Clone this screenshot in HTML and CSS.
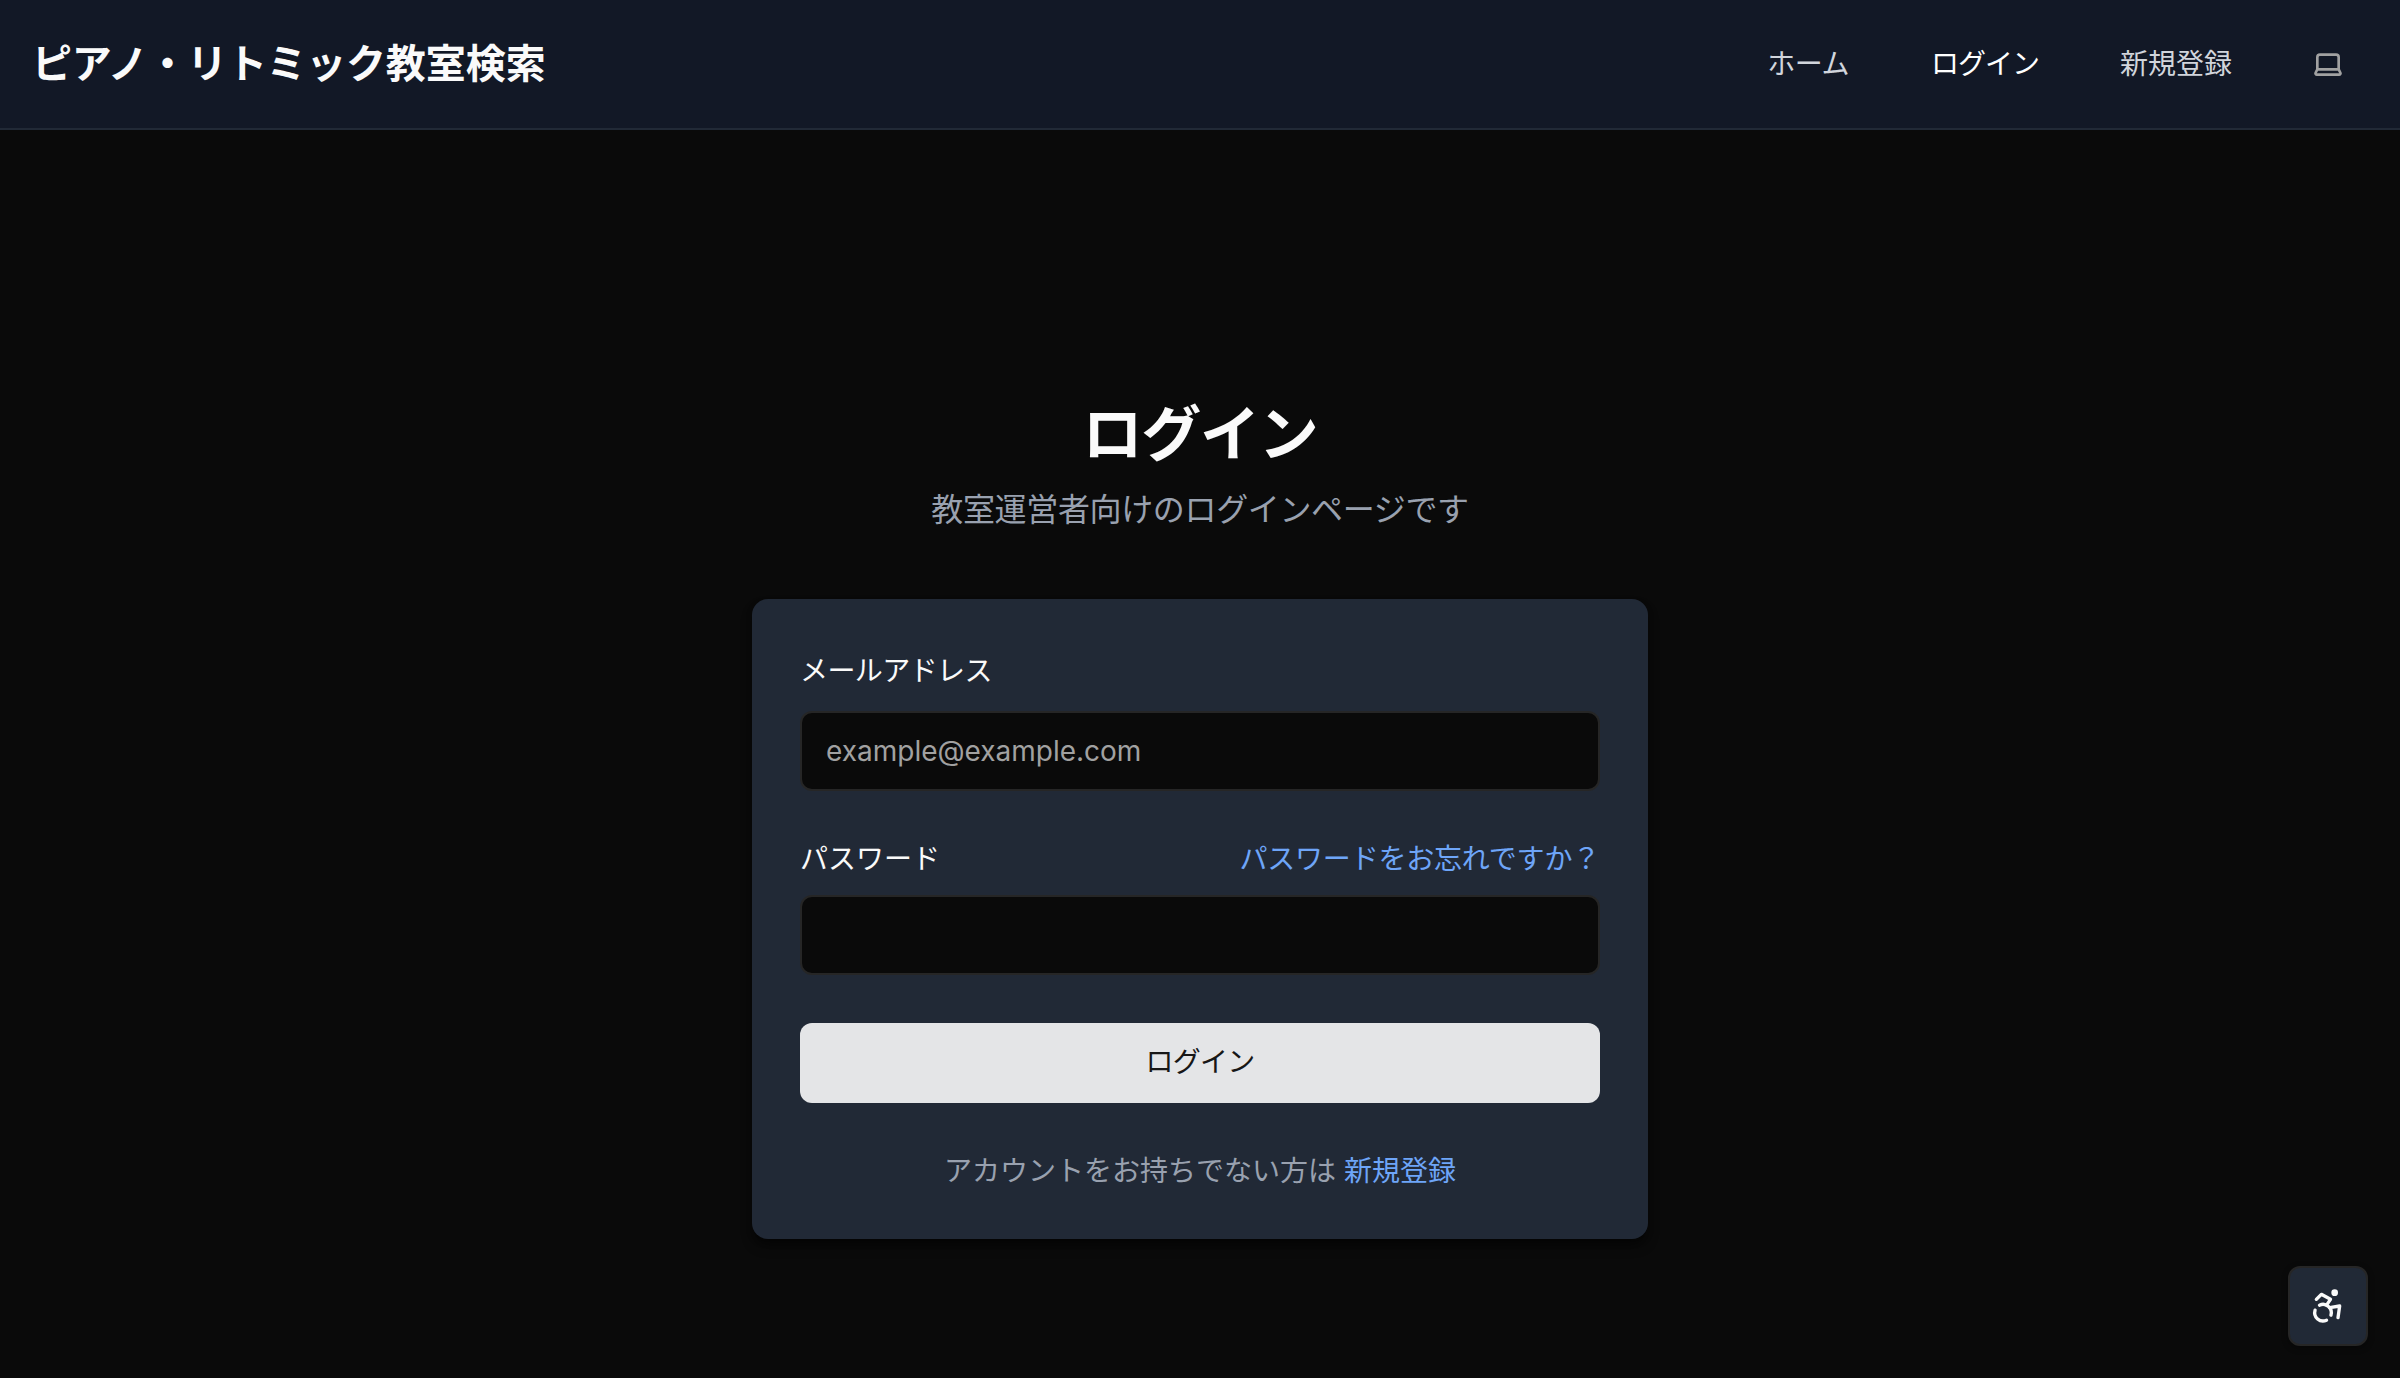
FILE: index.html
```html
<!DOCTYPE html>
<html lang="ja">
<head>
<meta charset="utf-8">
<title>ログイン</title>
<link rel="stylesheet" href="styles.css">
</head>
<body>
<header class="header">
  <a class="brand"><span class="brand-kana">ピアノ・リトミック</span>教室検索</a>
  <nav class="nav">
    <a class="nav-link nav-home">ホーム</a>
    <a class="nav-link nav-login active">ログイン</a>
    <a class="nav-link nav-signup">新規登録</a>
    <button class="theme" aria-label="テーマ">
      <svg width="32" height="32" viewBox="0 0 24 24" fill="none" stroke="currentColor" stroke-width="2" stroke-linecap="round" stroke-linejoin="round"><path d="M20 16V7a2 2 0 0 0-2-2H6a2 2 0 0 0-2 2v9m16 0H4m16 0 1.28 2.55a1 1 0 0 1-.9 1.45H3.62a1 1 0 0 1-.9-1.45L4 16"/></svg>
    </button>
  </nav>
</header>
<main class="main">
  <h1 class="title">ログイン</h1>
  <p class="subtitle">教室運営者向けのログインページです</p>
  <form class="card">
    <label class="label label-email" for="email">メールアドレス</label>
    <input class="input" id="email" type="email" placeholder="example@example.com">
    <div class="row">
      <label class="label" for="password">パスワード</label>
      <a class="link forgot">パスワードをお忘れですか？</a>
    </div>
    <input class="input" id="password" type="password">
    <button class="submit" type="button">ログイン</button>
    <p class="signup">アカウントをお持ちでない方は <a class="link">新規登録</a></p>
  </form>
</main>
<button class="a11y" aria-label="アクセシビリティ">
  <svg width="40" height="40" viewBox="0 0 24 24" fill="none" stroke="currentColor" stroke-width="2" stroke-linecap="round" stroke-linejoin="round"><circle cx="16" cy="4" r="1"/><path d="m18 19 1-7-6 1"/><path d="m5 8 3-3 5.5 3-2.36 3.5"/><path d="M4.24 14.5a5 5 0 0 0 6.88 6"/><path d="M13.76 17.5a5 5 0 0 0-6.88-6"/></svg>
</button>
</body>
</html>
```
FILE: styles.css
```css
* { box-sizing: border-box; margin: 0; padding: 0; }
body {
  height: 1378px;
  overflow: hidden;
  background: #0a0a0a;
  color: #fafafa;
  font-family: Inter, "Noto Sans CJK JP", sans-serif;
  font-size: 28px;
  line-height: 40px;
}
button, input { font: inherit; border: 0; }
.header {
  display: flex;
  justify-content: space-between;
  align-items: center;
  height: 130px;
  padding: 0 32px;
  background: #121826;
  border-bottom: 2px solid #212936;
}
.brand { font-size: 40px; line-height: 56px; font-weight: 700; }
.brand-kana { letter-spacing: -0.3px; }
.nav { display: flex; align-items: center; }
.nav-link { color: #d1d5dc; }
.nav-home { margin-right: 82px; letter-spacing: -0.5px; }
.nav-login { margin-right: 81px; letter-spacing: -1px; }
.nav-signup { margin-right: 56px; }
.active { color: #fff; }
.theme {
  display: flex;
  align-items: center;
  justify-content: center;
  width: 80px;
  height: 80px;
  background: none;
  color: #a1a1a1;
}
.main {
  display: flex;
  flex-direction: column;
  align-items: center;
  padding-top: 268px;
}
.title {
  font-size: 60px;
  line-height: 72px;
  font-weight: 700;
  letter-spacing: -1.2px;
  margin-bottom: 16px;
}
.subtitle {
  font-size: 32px;
  line-height: 48px;
  letter-spacing: -0.35px;
  color: #99a1af;
  margin-bottom: 65px;
}
.card {
  display: flex;
  flex-direction: column;
  width: 896px;
  height: 640px;
  padding: 48px;
  background: #212936;
  border-radius: 16px;
  box-shadow: 0 8px 12px -2px rgba(0, 0, 0, .5), 0 4px 8px -4px rgba(0, 0, 0, .5);
}
.label-email { line-height: 48px; margin-bottom: 16px; letter-spacing: -0.6px; }
.input {
  height: 80px;
  padding: 0 24px;
  color: #fafafa;
  background: #0a0a0a;
  border: 2px solid #262626;
  border-radius: 12px;
}
.input::placeholder { color: #a1a1a1; opacity: 1; }
.row { display: flex; justify-content: space-between; margin: 48px 0 16px; }
.link { color: #6ea5f8; }
.forgot { letter-spacing: -0.2px; }
.submit {
  height: 80px;
  margin: 48px 0;
  padding-bottom: 2px;
  border-radius: 12px;
  background: #e4e5e7;
  color: #171717;
  letter-spacing: -0.7px;
}
.signup { text-align: center; color: #99a1af; }
.a11y {
  position: fixed;
  right: 32px;
  bottom: 32px;
  display: flex;
  align-items: center;
  justify-content: center;
  width: 80px;
  height: 80px;
  color: #fafafa;
  background: #212936;
  border: 2px solid #262626;
  border-radius: 12px;
  box-shadow: 0 2px 6px rgba(0, 0, 0, .4);
}
```
